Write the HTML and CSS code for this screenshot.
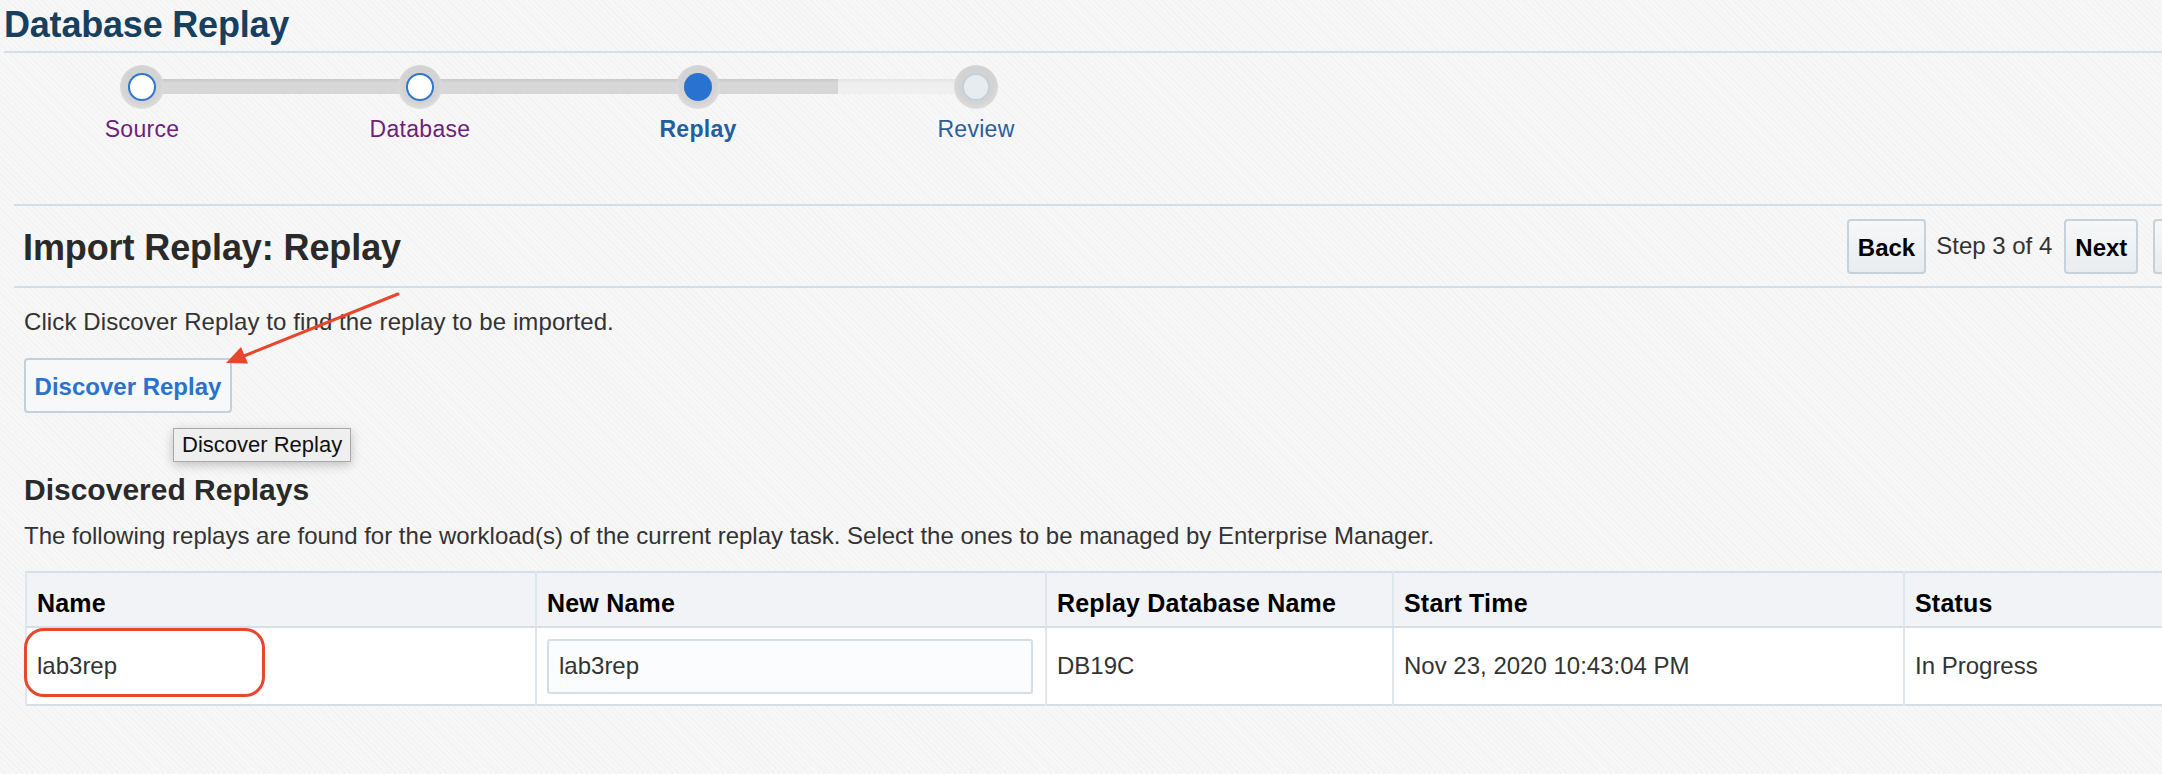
FILE: index.html
```html
<!DOCTYPE html>
<html lang="en">
<head>
<meta charset="utf-8">
<title>Database Replay</title>
<link rel="stylesheet" href="styles.css">
</head>
<body>
<div class="page">
  <header class="page-head">
    <h1 class="page-title">Database Replay</h1>
  </header>

  <nav class="train">
    <div class="train-track"><span class="track-done"></span><span class="track-todo"></span></div>
    <div class="step visited"><span class="halo"><span class="dot"></span></span><span class="step-label">Source</span></div>
    <div class="step visited"><span class="halo"><span class="dot"></span></span><span class="step-label">Database</span></div>
    <div class="step current"><span class="halo"><span class="dot"></span></span><span class="step-label">Replay</span></div>
    <div class="step todo"><span class="halo"><span class="dot"></span></span><span class="step-label">Review</span></div>
  </nav>

  <section class="panel">
    <div class="panel-head">
      <h2 class="panel-title">Import Replay: Replay</h2>
      <div class="nav-buttons">
        <button class="btn">Back</button>
        <span class="step-count">Step 3 of 4</span>
        <button class="btn btn-next">Next</button>
        <button class="btn btn-finish">Finish</button>
      </div>
    </div>

    <div class="panel-body">
      <p class="intro">Click Discover Replay to find the replay to be imported.</p>
      <div class="discover-wrap">
        <button class="btn-discover">Discover Replay</button>
        <div class="tooltip">Discover Replay</div>
      </div>

      <h3 class="sub-title">Discovered Replays</h3>
      <p class="desc">The following replays are found for the workload(s) of the current replay task. Select the ones to be managed by Enterprise Manager.</p>

      <div class="table-wrap">
        <table class="grid">
          <colgroup>
            <col class="c1"><col class="c2"><col class="c3"><col class="c4"><col class="c5">
          </colgroup>
          <thead>
            <tr><th>Name</th><th>New Name</th><th>Replay Database Name</th><th>Start Time</th><th>Status</th></tr>
          </thead>
          <tbody>
            <tr>
              <td>lab3rep</td>
              <td><input class="name-input" type="text" value="lab3rep"></td>
              <td>DB19C</td>
              <td>Nov 23, 2020 10:43:04 PM</td>
              <td>In Progress</td>
            </tr>
          </tbody>
        </table>
        <div class="highlight"></div>
      </div>
    </div>
  </section>

  <svg class="arrow" width="2162" height="774" viewBox="0 0 2162 774" aria-hidden="true">
    <line x1="398" y1="294" x2="244" y2="356" stroke="#e5482c" stroke-width="3" stroke-linecap="round"/>
    <polygon points="226,363 248,363.5 241,347" fill="#e5482c"/>
  </svg>
</div>
</body>
</html>
```

FILE: styles.css
```css
html, body {
  margin: 0;
  padding: 0;
}

body {
  width: 2162px;
  height: 774px;
  overflow: hidden;
  font-family: "Liberation Sans", Arial, Helvetica, sans-serif;
  color: #333;
  background-color: #f7f7f7;
  background-image: repeating-linear-gradient(45deg, rgba(0, 0, 0, 0.018) 0 1px, transparent 1px 4px);
}

.page {
  position: relative;
  width: 2262px;
  height: 774px;
}

/* ---------- page header ---------- */
.page-head {
  margin-left: 4px;
  height: 51px;
  border-bottom: 2px solid #d4dee7;
}

.page-title {
  margin: 0;
  padding-top: 5px;
  font-size: 36px;
  line-height: 40px;
  font-weight: bold;
  color: #173f5f;
  letter-spacing: -0.2px;
}

/* ---------- train / stepper ---------- */
.train {
  position: relative;
  margin-left: 3px;
  height: 151px;
  box-sizing: border-box;
  padding-top: 12px;
  display: grid;
  grid-template-columns: repeat(4, 278px);
}

.train-track {
  position: absolute;
  left: 139px;
  top: 26px;
  height: 15px;
  display: flex;
}

.track-done {
  width: 696px;
  background: linear-gradient(#c9c9c9, #d8d8d8 30%, #d6d6d6);
}

.track-todo {
  width: 138px;
  background: linear-gradient(#e4e4e4, #efefef 30%, #f0f0f0);
}

.step {
  position: relative;
  display: flex;
  flex-direction: column;
  align-items: center;
}

.halo {
  width: 44px;
  height: 44px;
  border-radius: 50%;
  background: radial-gradient(circle at 50% 45%, #d3d3d3 55%, #e2e2e2 80%, #ececec 100%);
  display: flex;
  align-items: center;
  justify-content: center;
}

.dot {
  width: 28px;
  height: 28px;
  box-sizing: border-box;
  border-radius: 50%;
}

.visited .dot {
  background: #ffffff;
  border: 2.5px solid #2d76d2;
}

.current .dot {
  background: #2a72d0;
}

.todo .dot {
  background: #e8ecef;
  border: 2px solid #c4d1dc;
}

.step-label {
  margin-top: 6px;
  font-size: 23px;
  line-height: 28px;
  letter-spacing: 0.3px;
}

.visited .step-label {
  color: #6e1f7c;
}

.current .step-label {
  color: #235e9f;
  font-weight: bold;
}

.todo .step-label {
  color: #2b5d98;
}

/* ---------- panel ---------- */
.panel {
  margin-left: 14px;
  border-top: 2px solid #d4dee7;
}

.panel-head {
  height: 80px;
  border-bottom: 2px solid #d4dee7;
  padding-left: 9px;
  display: flex;
  align-items: center;
  justify-content: space-between;
}

.panel-title {
  margin: 0;
  padding-top: 3px;
  font-size: 36px;
  line-height: 40px;
  font-weight: bold;
  color: #2a2a2a;
  letter-spacing: -0.1px;
}

.nav-buttons {
  display: flex;
  align-items: center;
  padding-right: 16px;
}

.btn {
  height: 55px;
  box-sizing: border-box;
  padding: 2px 9px 0;
  border: 2px solid #c6d1da;
  border-radius: 4px;
  background: linear-gradient(#f6f7f9, #e9edf0);
  font-family: inherit;
  font-size: 24px;
  line-height: 49px;
  font-weight: bold;
  color: #000;
}

.step-count {
  margin: 0 12px 0 10px;
  font-size: 24px;
  line-height: 28px;
  color: #333;
}

.btn-finish {
  margin-left: 15px;
}

.panel-body {
  padding: 20px 0 0 10px;
}

.intro {
  margin: 0;
  font-size: 24px;
  line-height: 28px;
  color: #333;
  letter-spacing: 0.1px;
}

.discover-wrap {
  position: relative;
  margin-top: 22px;
  width: 208px;
}

.btn-discover {
  display: block;
  width: 208px;
  height: 55px;
  box-sizing: border-box;
  padding: 2px 0 0;
  border: 2px solid #c3cfda;
  border-radius: 4px;
  background: #f6f8fa;
  font-family: inherit;
  font-size: 24px;
  line-height: 49px;
  font-weight: bold;
  color: #2a72cf;
  text-align: center;
}

.tooltip {
  position: absolute;
  left: 149px;
  top: 70px;
  height: 34px;
  box-sizing: border-box;
  padding: 0 8px;
  border: 1px solid #a9a9a9;
  background: #efefef;
  box-shadow: 0 3px 10px rgba(0, 0, 0, 0.22);
  font-size: 22px;
  line-height: 32px;
  color: #111;
  white-space: nowrap;
}

.sub-title {
  margin: 59px 0 0;
  font-size: 30px;
  line-height: 36px;
  font-weight: bold;
  color: #2a2a2a;
}

.desc {
  margin: 14px 0 0;
  font-size: 24px;
  line-height: 28px;
  color: #333;
  white-space: nowrap;
}

/* ---------- table ---------- */
.table-wrap {
  position: relative;
  margin: 21px 0 0 1px;
}

.grid {
  table-layout: fixed;
  border-collapse: collapse;
  width: 2227px;
  background: #fff;
  border: 2px solid #d5dfe7;
}

.c1 { width: 510px; }
.c2 { width: 510px; }
.c3 { width: 347px; }
.c4 { width: 511px; }
.c5 { width: 349px; }

.grid th,
.grid td {
  border-left: 2px solid #dfe6ec;
  text-align: left;
  vertical-align: middle;
  padding: 0 10px;
  font-size: 24px;
  line-height: 28px;
  white-space: nowrap;
}

.grid th {
  height: 55px;
  padding-top: 6px;
  box-sizing: border-box;
  background: #f1f3f6;
  border-bottom: 2px solid #d5dfe7;
  font-size: 25px;
  font-weight: bold;
  color: #000;
  letter-spacing: 0.2px;
}

.grid td {
  height: 78px;
  box-sizing: border-box;
  color: #333;
}

.name-input {
  display: block;
  width: 486px;
  height: 55px;
  box-sizing: border-box;
  border: 2px solid #d6dde4;
  border-radius: 3px;
  background: #fbfcfd;
  padding: 0 10px;
  font-family: inherit;
  font-size: 24px;
  color: #333;
}

.highlight {
  position: absolute;
  left: -1px;
  top: 57px;
  width: 241px;
  height: 69px;
  box-sizing: border-box;
  border: 3px solid #e5482c;
  border-radius: 20px;
}

.arrow {
  position: absolute;
  left: 0;
  top: 0;
  pointer-events: none;
}
```
